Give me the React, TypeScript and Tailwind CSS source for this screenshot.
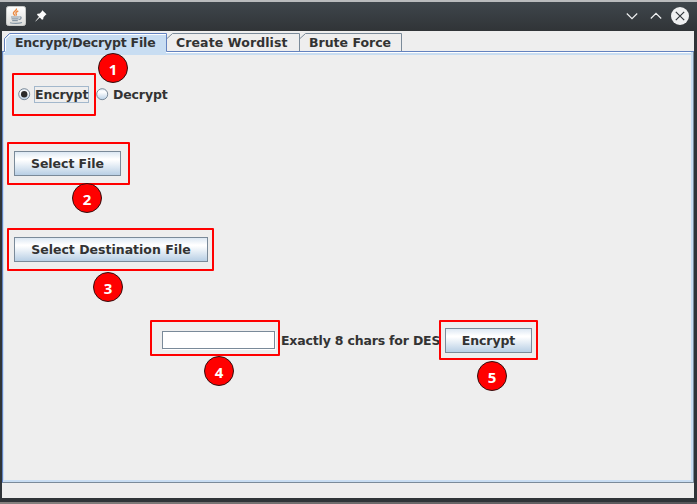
import React from "react";

function JavaIcon() {
  return (
    <svg width="20" height="20" viewBox="0 0 20 20" className="shrink-0">
      <defs>
        <linearGradient id="tile" x1="0" y1="0" x2="0" y2="1">
          <stop offset="0" stopColor="#ffffff" />
          <stop offset="1" stopColor="#dcdcda" />
        </linearGradient>
      </defs>
      <rect x="0.5" y="0.5" width="19" height="19" rx="2" fill="url(#tile)" stroke="#c9cbca" />
      <path d="M10.400 2.500c1 2-3.300 2.800-3 4.800 .1 1 1 1.500 1.600 2.300M12.300 5c-2 .8-3 1.600-2.200 2.700.6.7.3 1.300-.3 1.900" fill="none" stroke="#ec8a42" strokeWidth="1.400" />
      <path d="M5 11h8M5.500 12.800h7M6.200 14.600h5.600M13.300 11c2.600-.6 2.500 2.200-.5 2.600M4 16.700c3 .9 9 .9 12-.2" fill="none" stroke="#8797a5" strokeWidth="1.200" />
    </svg>
  );
}

function TitleBar() {
  return (
    <div className="flex h-[29px] items-center bg-gradient-to-b from-[#3f464c] to-[#303437] pb-px pl-[6px]">
      <JavaIcon />
      <svg width="12" height="12" viewBox="0 0 12 12" className="ml-[9px]">
        <path d="M7.300.3 11.500 4.300 10.300 5.300 8.500 7.200 8.200 9.300 7 9.800 4.800 7.600.5 11.600.3 11.300 4 6.800 2 4.800 2.500 3.700 4.800 3.400 6.700 1.500Z" fill="#fcfcfc" />
      </svg>
      <div className="grow" />
      <svg width="70" height="20" viewBox="0 0 70 20" className="mr-[7px]" fill="none" stroke="#eff0f1" strokeWidth="1.200">
        <path d="M6.800 7.500 12 12.700 17.200 7.500M30.800 12.500 36 7.300 41.200 12.500" />
        <circle cx="60" cy="10" r="9" fill="#eff0f1" stroke="none" />
        <path d="M55.800 5.800 64.200 14.200M64.200 5.800 55.800 14.200" stroke="#31363b" />
      </svg>
    </div>
  );
}

function TabStrip() {
  return (
    <div className="relative h-[21px] bg-[#eeeeee]">
      <svg width="692" height="24" viewBox="0 0 692 24" className="absolute left-0 top-0">
        <path d="M3 24V8L8 3H164V24Z" fill="#c8ddf2" />
        <path d="M3.500 20V8L8.500 3.500H164" fill="none" stroke="#ffffff" />
        <path d="M165 7.500 170.500 2.500H297.500V20M298 7.500 303.500 2.500H399.500V20" fill="none" stroke="#7a8a99" />
        <path d="M0 20.500H2.500V7.500L7.500 2.500H164.500V20.500H692" fill="none" stroke="#6382bf" />
      </svg>
      <div className="relative flex h-[21px] items-center pt-[2px] leading-[18px]">
        <span className="ml-[13px] w-[161px] whitespace-nowrap tracking-[-0.180px]">Encrypt/Decrypt File</span>
        <span className="w-[133px] tracking-[0.100px]">Create Wordlist</span>
        <span className="tracking-[0px]">Brute Force</span>
      </div>
    </div>
  );
}

function Radio({ checked }: { checked?: boolean }) {
  return (
    <svg width="13" height="13" viewBox="0 0 13 13" className="shrink-0">
      <defs>
        <linearGradient id="radio" x1="0" y1="0" x2="0" y2="1">
          <stop offset="0" stopColor="#e0eaf5" />
          <stop offset="0.300" stopColor="#ffffff" />
          <stop offset="1" stopColor="#b8cfe5" />
        </linearGradient>
      </defs>
      <circle cx="6.200" cy="6.200" r="5.500" fill="url(#radio)" stroke="#7a8a99" />
      {checked && <circle cx="6.200" cy="6.200" r="3.200" fill="#2b2b2b" />}
    </svg>
  );
}

function Button({ children, className }: { children: string; className: string }) {
  return (
    <button className={"flex h-[25px] items-center justify-center whitespace-nowrap border border-[#7a8a99] bg-[linear-gradient(to_bottom,#dde8f3_0%,#ffffff_30%,#ffffff_34%,#b8cfe5_100%)] " + className}>
      {children}
    </button>
  );
}

function Badge({ n, className }: { n: number; className: string }) {
  return (
    <div className={"absolute flex size-[30px] items-center justify-center rounded-full border border-[#301010] bg-[#ff0000] pt-[2px] font-['Noto_Sans',sans-serif] text-[15px] font-bold leading-none text-white " + className}>
      {n}
    </div>
  );
}

function Outline({ className }: { className: string }) {
  return <div className={"absolute rounded-[1px] border-2 border-[#ff0000] " + className} />;
}

export default function App() {
  return (
    <div className="relative flex h-[504px] w-[697px] flex-col overflow-hidden bg-[#2f3438] font-['DejaVu_Sans',sans-serif] text-[12.5px] font-bold leading-[16px] text-[#333333]">
      <div className="h-[2px] shrink-0 bg-[#b9bbbd]" />
      <TitleBar />
      <div className="ml-[2px] flex h-[467px] w-[692px] flex-col bg-[#eeeeee]">
        <TabStrip />
        <div className="flex h-[431px] flex-col border-b border-l border-r border-b-[#7a8a99] border-l-[#6382bf] border-r-[#7a8a99]">
          <div className="flex grow flex-col border-b-2 border-l border-r-2 border-[#c8ddf2]">
            <div className="h-px shrink-0 bg-white" />
            <div className="h-[2px] shrink-0 bg-[#c8ddf2]" />
            <div className="mt-[30px] flex h-[18px] items-center pl-[14px]">
              <Radio checked />
              <span className="ml-[3px] flex h-[17px] w-[55px] items-center border border-[#a3b8cc] pt-[2px] tracking-[-0.120px]">Encrypt</span>
              <span className="ml-[7px] flex"><Radio /></span>
              <span className="ml-[4px] pt-[2px] tracking-[-0.130px]">Decrypt</span>
            </div>
            <div className="mt-[48px] flex pl-[10px]">
              <Button className="w-[107px] tracking-[-0.050px]">Select File</Button>
            </div>
            <div className="mt-[61px] flex pl-[10px]">
              <Button className="w-[194px] tracking-[0px]">Select Destination File</Button>
            </div>
            <div className="mt-[66px] flex h-[25px] items-center pl-[158px]">
              <div className="-mt-px h-[18px] w-[113px] border border-[#7a8a99] bg-white shadow-[1px_1px_0_#ffffff]" />
              <span className="ml-[6px] w-[160px] whitespace-nowrap tracking-[-0.180px]">Exactly 8 chars for DES</span>
              <Button className="ml-[4px] w-[87px] tracking-[-0.080px]">Encrypt</Button>
            </div>
          </div>
        </div>
      </div>
      <div className="mt-auto h-[2px] bg-gradient-to-r from-[#85817f] to-[#56565a]" />
      <Outline className="left-[12px] top-[73px] h-[43px] w-[84px]" />
      <Outline className="left-[7px] top-[142px] h-[43px] w-[123px]" />
      <Outline className="left-[7px] top-[228px] h-[43px] w-[207px]" />
      <Outline className="left-[150px] top-[320px] h-[36px] w-[130px]" />
      <Outline className="left-[439px] top-[320px] h-[40px] w-[99px]" />
      <Badge n={1} className="left-[98px] top-[53px]" />
      <Badge n={2} className="left-[72px] top-[183px]" />
      <Badge n={3} className="left-[93px] top-[272px]" />
      <Badge n={4} className="left-[204px] top-[356px]" />
      <Badge n={5} className="left-[477px] top-[361px]" />
    </div>
  );
}
